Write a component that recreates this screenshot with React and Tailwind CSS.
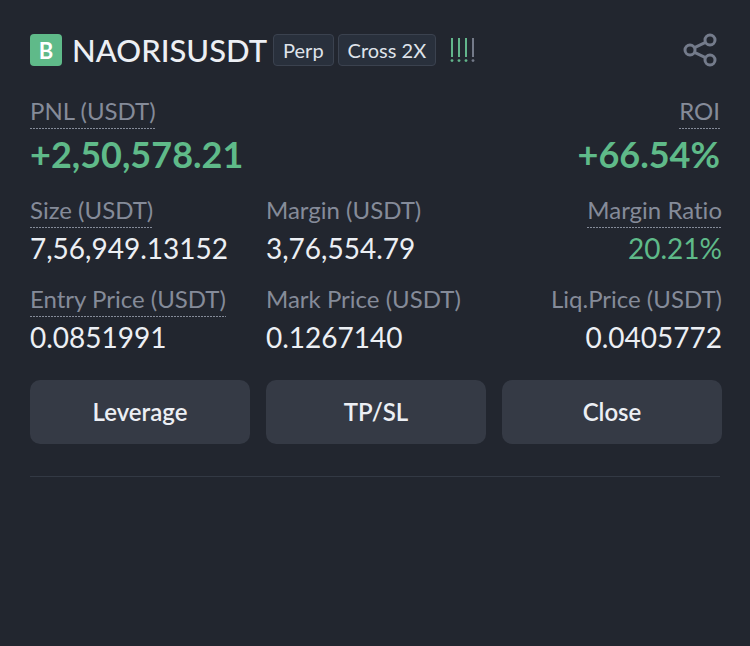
import clsx from 'clsx';

const stats = [
  { label: 'Size (USDT)', value: '7,56,949.13152', hint: true },
  { label: 'Margin (USDT)', value: '3,76,554.79' },
  { label: 'Margin Ratio', value: '20.21%', hint: true, positive: true },
  { label: 'Entry Price (USDT)', value: '0.0851991', hint: true },
  { label: 'Mark Price (USDT)', value: '0.1267140' },
  { label: 'Liq.Price (USDT)', value: '0.0405772' },
];

const actions = ['Leverage', 'TP/SL', 'Close'];

// hint adds the dotted underline of a label that explains itself on tap
function Label({ children, hint }) {
  return (
    <dt
      className={clsx(
        'h-8 w-fit whitespace-nowrap text-2xl leading-7 text-[#858b99]',
        hint &&
          'bg-[repeating-linear-gradient(90deg,#858b99_0_2px,transparent_2px_3px)] bg-[length:100%_1px] bg-bottom bg-no-repeat'
      )}
    >
      {children}
    </dt>
  );
}

function Tag({ children }) {
  return (
    <span className="flex h-8 items-center whitespace-nowrap rounded-sm border border-[#3b424f] bg-[#29303c] px-[9px] text-xl text-[#dfe3ea]">
      {children}
    </span>
  );
}

// Auto-deleverage rank: lit bars first, the rest stay grey
function RankBars({ level }) {
  return (
    <svg className="ml-3.5 h-7 w-7" viewBox="0 0 28 28" aria-hidden="true">
      {[0, 1, 2, 3].map((i) => (
        <g key={i} fill={i < level ? '#62b58b' : '#747a89'}>
          <rect x={1 + i * 7} y="2" width="2" height="19" />
          <circle cx={2 + i * 7} cy="24.6" r="1.4" />
        </g>
      ))}
    </svg>
  );
}

function ShareIcon() {
  return (
    <svg className="h-9 w-9" viewBox="0 0 36 36" fill="none" stroke="#747b8b" strokeWidth="3" aria-hidden="true">
      <circle cx="8" cy="18" r="5" />
      <circle cx="28" cy="8" r="5" />
      <circle cx="28" cy="28" r="5" />
      <path d="M12.5 15.6 23.5 10.4M12.5 20.4 23.5 25.6" />
    </svg>
  );
}

export default function App() {
  return (
    <main className="min-h-screen bg-[#22262f] pl-[30px] pr-7 pt-8 font-['Lato','Liberation_Sans',sans-serif] text-[#eceff4] [font-variant-ligatures:none]">
      <header className="flex h-9 items-center">
        <span className="flex h-8 w-8 items-center justify-center rounded-sm bg-[#5fba89] text-[22px] font-bold text-white">
          B
        </span>
        <h1 className="ml-2.5 mr-1.5 text-[31px] font-medium leading-9">NAORISUSDT</h1>
        <div className="flex gap-1">
          <Tag>Perp</Tag>
          <Tag>Cross 2X</Tag>
        </div>
        <RankBars level={3} />
        <button type="button" aria-label="Share" className="ml-auto mr-1">
          <ShareIcon />
        </button>
      </header>

      <dl className="mr-0.5 mt-[29px] flex justify-between">
        <div>
          <Label hint>PNL (USDT)</Label>
          <dd className="text-4xl font-bold leading-[50px] text-[#5fba89]">+2,50,578.21</dd>
        </div>
        <div className="flex flex-col items-end">
          <Label hint>ROI</Label>
          <dd className="text-4xl font-bold leading-[50px] text-[#5fba89]">+66.54%</dd>
        </div>
      </dl>

      <dl className="mt-[17px] grid grid-cols-3 gap-x-4 gap-y-[17px]">
        {stats.map((stat) => (
          <div key={stat.label} className="flex flex-col items-start nth-[3n]:items-end">
            <Label hint={stat.hint}>{stat.label}</Label>
            <dd
              className={clsx(
                'whitespace-nowrap text-[28px] leading-10',
                stat.positive && 'text-[#5fba89]'
              )}
            >
              {stat.value}
            </dd>
          </div>
        ))}
      </dl>

      <div className="mt-[23px] grid grid-cols-3 gap-4">
        {actions.map((action) => (
          <button
            key={action}
            type="button"
            className="h-16 rounded-[10px] bg-[#353a45] text-2xl font-semibold"
          >
            {action}
          </button>
        ))}
      </div>

      <hr className="mr-0.5 mt-8 border-[#333944]" />
    </main>
  );
}
